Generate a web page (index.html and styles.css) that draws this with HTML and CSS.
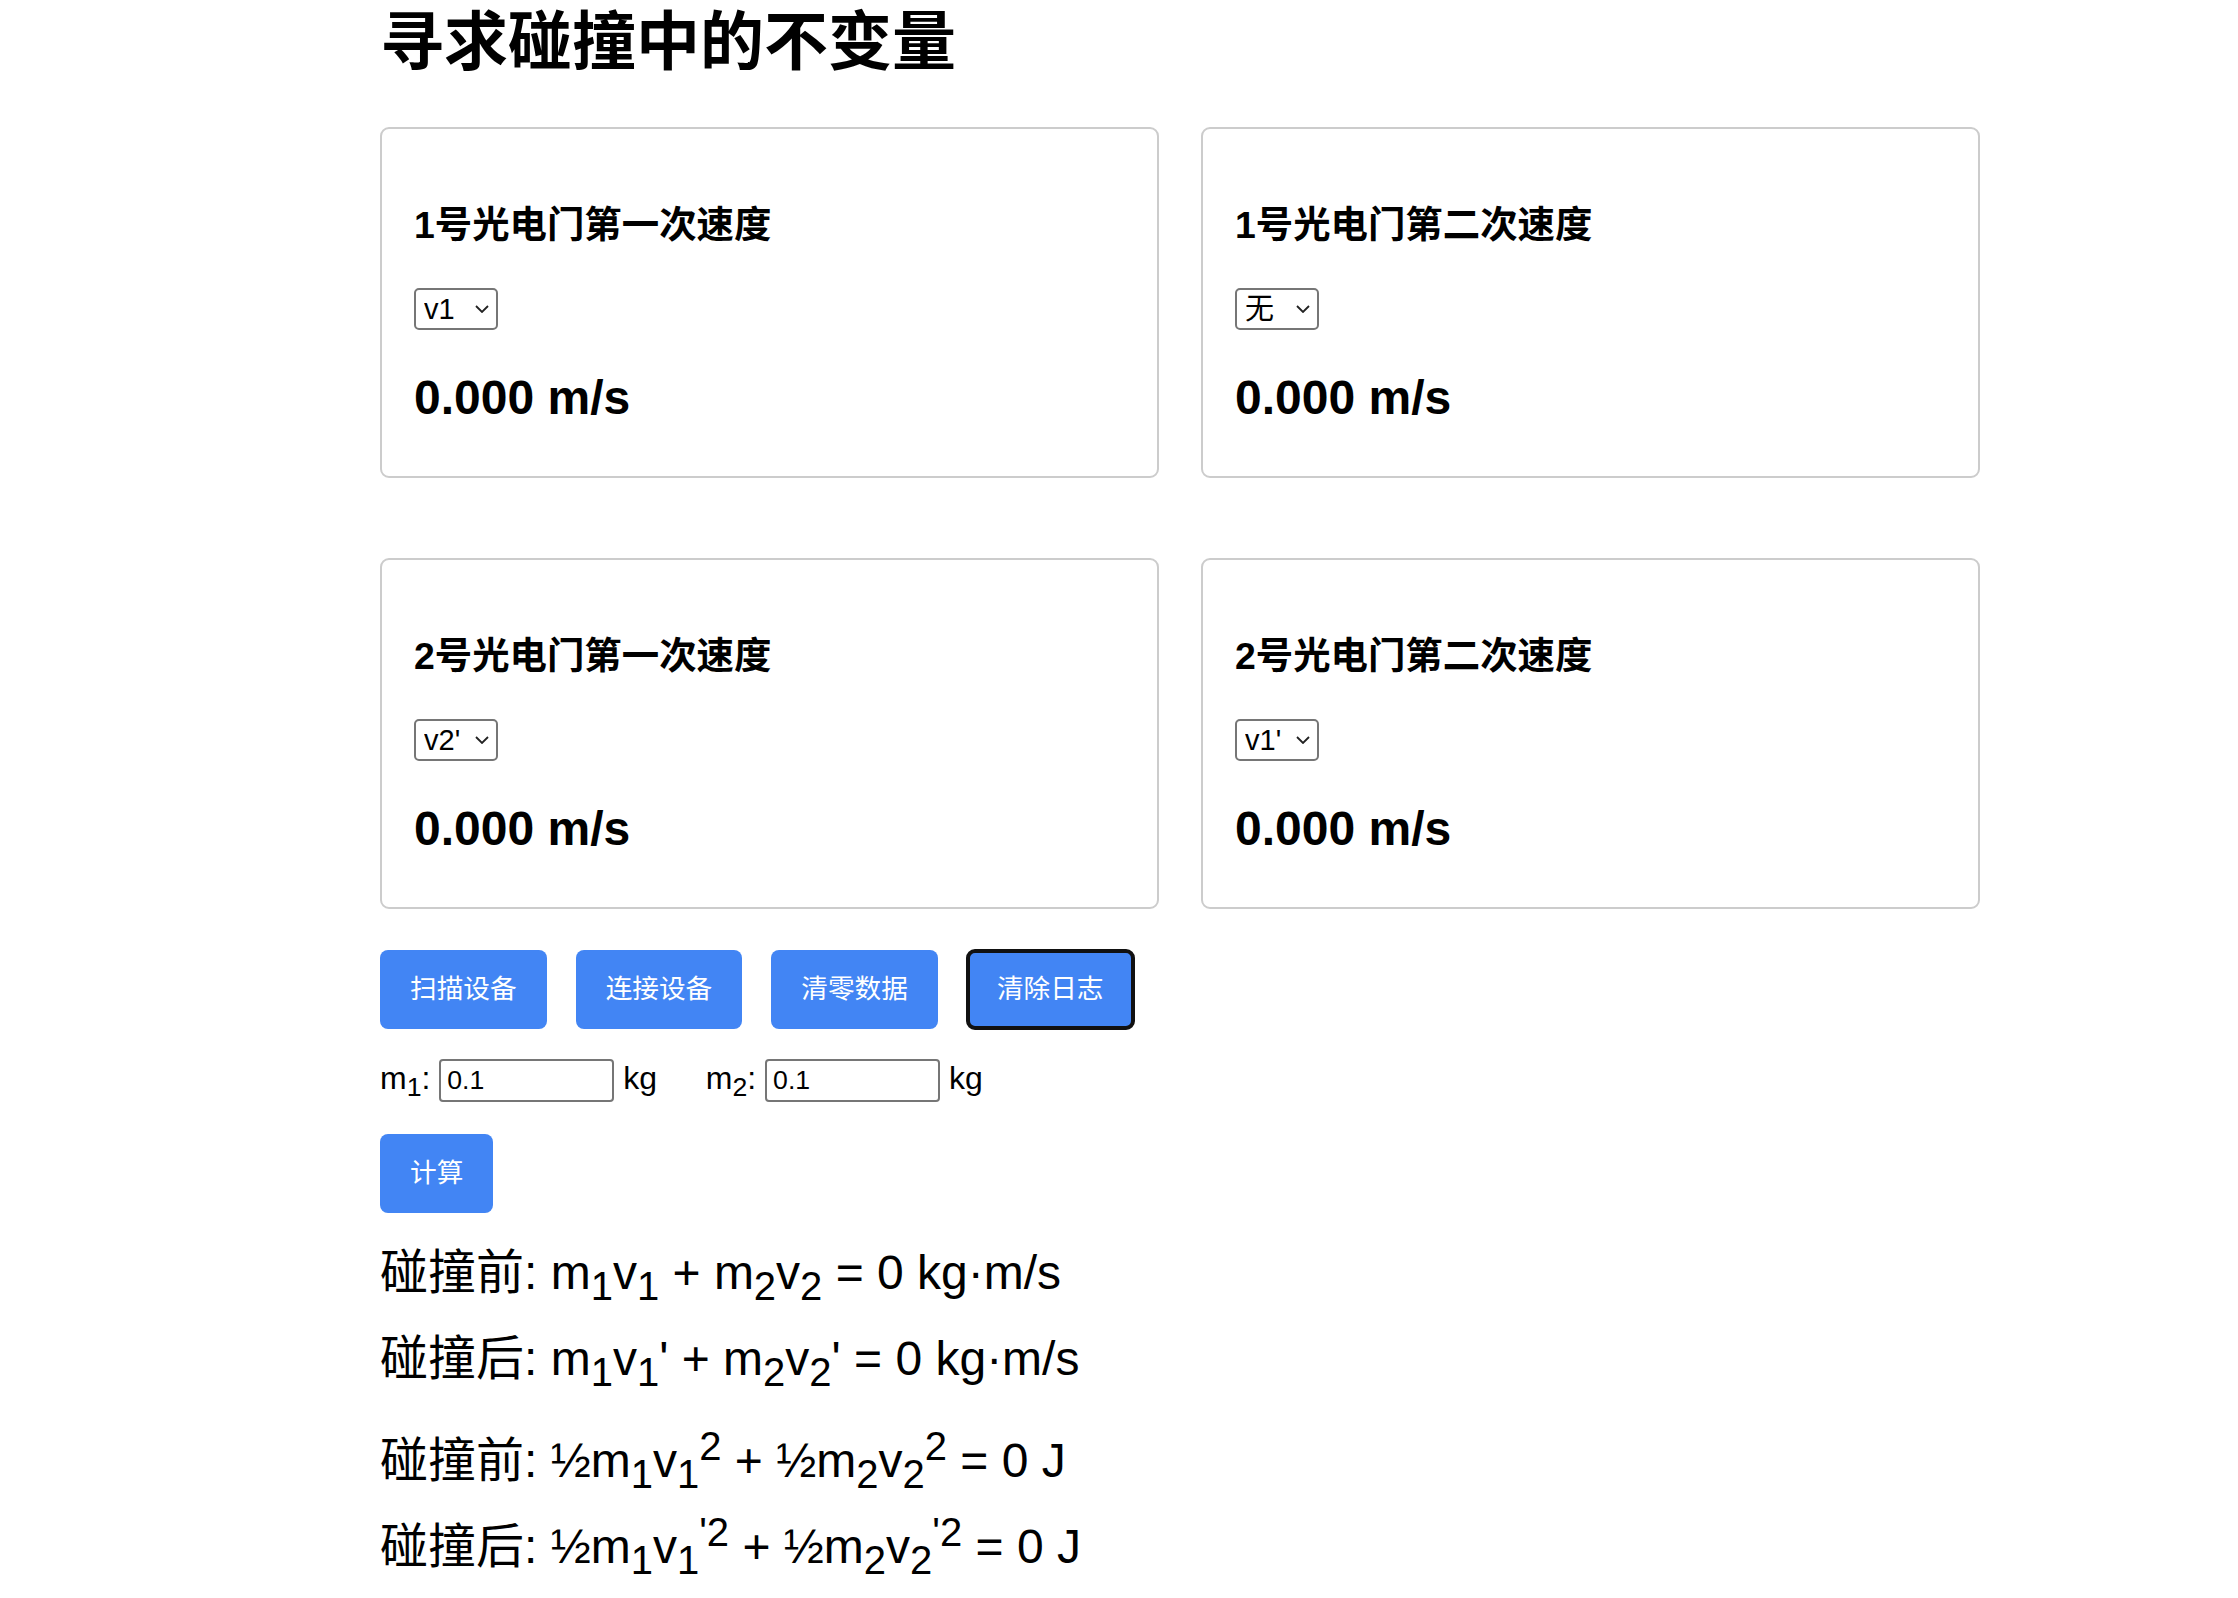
FILE: index.html
```html
<!DOCTYPE html>
<html lang="zh-CN">
<head>
<meta charset="utf-8">
<title>寻求碰撞中的不变量</title>
<link rel="stylesheet" href="styles.css">
</head>
<body>
<div class="page">
  <h1 class="title">寻求碰撞中的不变量</h1>

  <div class="cards">
    <div class="card">
      <h3 class="card-title">1号光电门第一次速度</h3>
      <span class="select-wrap">
        <select class="gate-select">
          <option>无</option>
          <option selected>v1</option>
          <option>v2</option>
          <option>v1'</option>
          <option>v2'</option>
        </select>
        <svg class="chev" width="14" height="8" viewBox="0 0 14 8"><path d="M1 1 L7 7 L13 1" fill="none" stroke="#222" stroke-width="1.8"/></svg>
      </span>
      <div class="speed">0.000 m/s</div>
    </div>
    <div class="card">
      <h3 class="card-title">1号光电门第二次速度</h3>
      <span class="select-wrap">
        <select class="gate-select">
          <option selected>无</option>
          <option>v1</option>
          <option>v2</option>
          <option>v1'</option>
          <option>v2'</option>
        </select>
        <svg class="chev" width="14" height="8" viewBox="0 0 14 8"><path d="M1 1 L7 7 L13 1" fill="none" stroke="#222" stroke-width="1.8"/></svg>
      </span>
      <div class="speed">0.000 m/s</div>
    </div>
    <div class="card">
      <h3 class="card-title">2号光电门第一次速度</h3>
      <span class="select-wrap">
        <select class="gate-select">
          <option>无</option>
          <option>v1</option>
          <option>v2</option>
          <option>v1'</option>
          <option selected>v2'</option>
        </select>
        <svg class="chev" width="14" height="8" viewBox="0 0 14 8"><path d="M1 1 L7 7 L13 1" fill="none" stroke="#222" stroke-width="1.8"/></svg>
      </span>
      <div class="speed">0.000 m/s</div>
    </div>
    <div class="card">
      <h3 class="card-title">2号光电门第二次速度</h3>
      <span class="select-wrap">
        <select class="gate-select">
          <option>无</option>
          <option>v1</option>
          <option>v2</option>
          <option selected>v1'</option>
          <option>v2'</option>
        </select>
        <svg class="chev" width="14" height="8" viewBox="0 0 14 8"><path d="M1 1 L7 7 L13 1" fill="none" stroke="#222" stroke-width="1.8"/></svg>
      </span>
      <div class="speed">0.000 m/s</div>
    </div>
  </div>

  <div class="actions">
    <button class="btn">扫描设备</button>
    <button class="btn">连接设备</button>
    <button class="btn">清零数据</button>
    <button class="btn btn-focus">清除日志</button>
  </div>

  <div class="masses">m<sub>1</sub>: <input class="mass-input" type="text" value="0.1"> kg <span class="mass2">m<sub>2</sub>: <input class="mass-input" type="text" value="0.1"> kg</span></div>

  <div class="calc-row"><button class="btn">计算</button></div>

  <div class="results">
    <div class="res-line">碰撞前: m<sub>1</sub>v<sub>1</sub> + m<sub>2</sub>v<sub>2</sub> = 0 kg·m/s</div>
    <div class="res-line">碰撞后: m<sub>1</sub>v<sub>1</sub>' + m<sub>2</sub>v<sub>2</sub>' = 0 kg·m/s</div>
    <div class="res-line res-gap">碰撞前: ½m<sub>1</sub>v<sub>1</sub><sup>2</sup> + ½m<sub>2</sub>v<sub>2</sub><sup>2</sup> = 0 J</div>
    <div class="res-line">碰撞后: ½m<sub>1</sub>v<sub>1</sub><sup>'2</sup> + ½m<sub>2</sub>v<sub>2</sub><sup>'2</sup> = 0 J</div>
  </div>
</div>
</body>
</html>
```

FILE: styles.css
```css
html, body {
  margin: 0;
  padding: 0;
  background: #fff;
}

body {
  font-family: "Liberation Sans", Arial, "Noto Sans CJK SC", sans-serif;
  color: #000;
}

.page {
  margin-left: 380px;
  width: 1600px;
}

.title {
  margin: 0;
  padding-top: 4px;
  font-size: 64px;
  line-height: 76px;
  font-weight: 700;
}

.cards {
  margin-top: 47px;
  display: grid;
  grid-template-columns: 1fr 1fr;
  column-gap: 42px;
  row-gap: 80px;
}

.card {
  border: 2px solid #cccccc;
  border-radius: 9px;
  padding: 72px 32px 50px;
}

.card-title {
  margin: 0;
  font-size: 37.4px;
  line-height: 48px;
  font-weight: 700;
}

.select-wrap {
  position: relative;
  display: block;
  width: 84px;
  height: 42px;
  margin-top: 39px;
}

.gate-select {
  appearance: none;
  -webkit-appearance: none;
  box-sizing: border-box;
  width: 84px;
  height: 42px;
  margin: 0;
  padding: 0 0 0 8px;
  border: 2px solid #767676;
  border-radius: 5px;
  background: #fff;
  color: #000;
  font-family: "Liberation Sans", Arial, "Noto Sans CJK SC", sans-serif;
  font-size: 29px;
  line-height: 38px;
}

.chev {
  position: absolute;
  right: 9px;
  top: 17px;
  pointer-events: none;
}

.speed {
  margin-top: 40px;
  font-size: 48px;
  line-height: 56px;
  font-weight: 700;
}

.actions {
  margin-top: 41px;
  display: flex;
  gap: 29px;
}

.btn {
  height: 79px;
  padding: 0 30px;
  border: none;
  border-radius: 8px;
  background: #4285f4;
  color: #fff;
  font-family: "Liberation Sans", Arial, "Noto Sans CJK SC", sans-serif;
  font-size: 26.67px;
  line-height: 79px;
  cursor: pointer;
}

.btn-focus {
  outline: 4px solid #111;
  outline-offset: -3px;
}

.masses {
  margin-top: 28px;
  font-size: 32px;
  line-height: 43px;
}

.masses sub,
.res-line sub,
.res-line sup {
  line-height: 0;
}

.mass-input {
  box-sizing: border-box;
  width: 175px;
  height: 43px;
  margin: 0;
  padding: 0 0 0 6px;
  border: 2px solid #767676;
  border-radius: 4px;
  font-family: "Liberation Sans", Arial, sans-serif;
  font-size: 26.67px;
  color: #000;
  background: #fff;
}

.mass2 {
  margin-left: 40px;
}

.calc-row {
  margin-top: 32px;
  display: flex;
}

.results {
  margin-top: 17px;
}

.res-line {
  font-size: 48px;
  line-height: 86px;
}

.res-gap {
  margin-top: 16px;
}
```
